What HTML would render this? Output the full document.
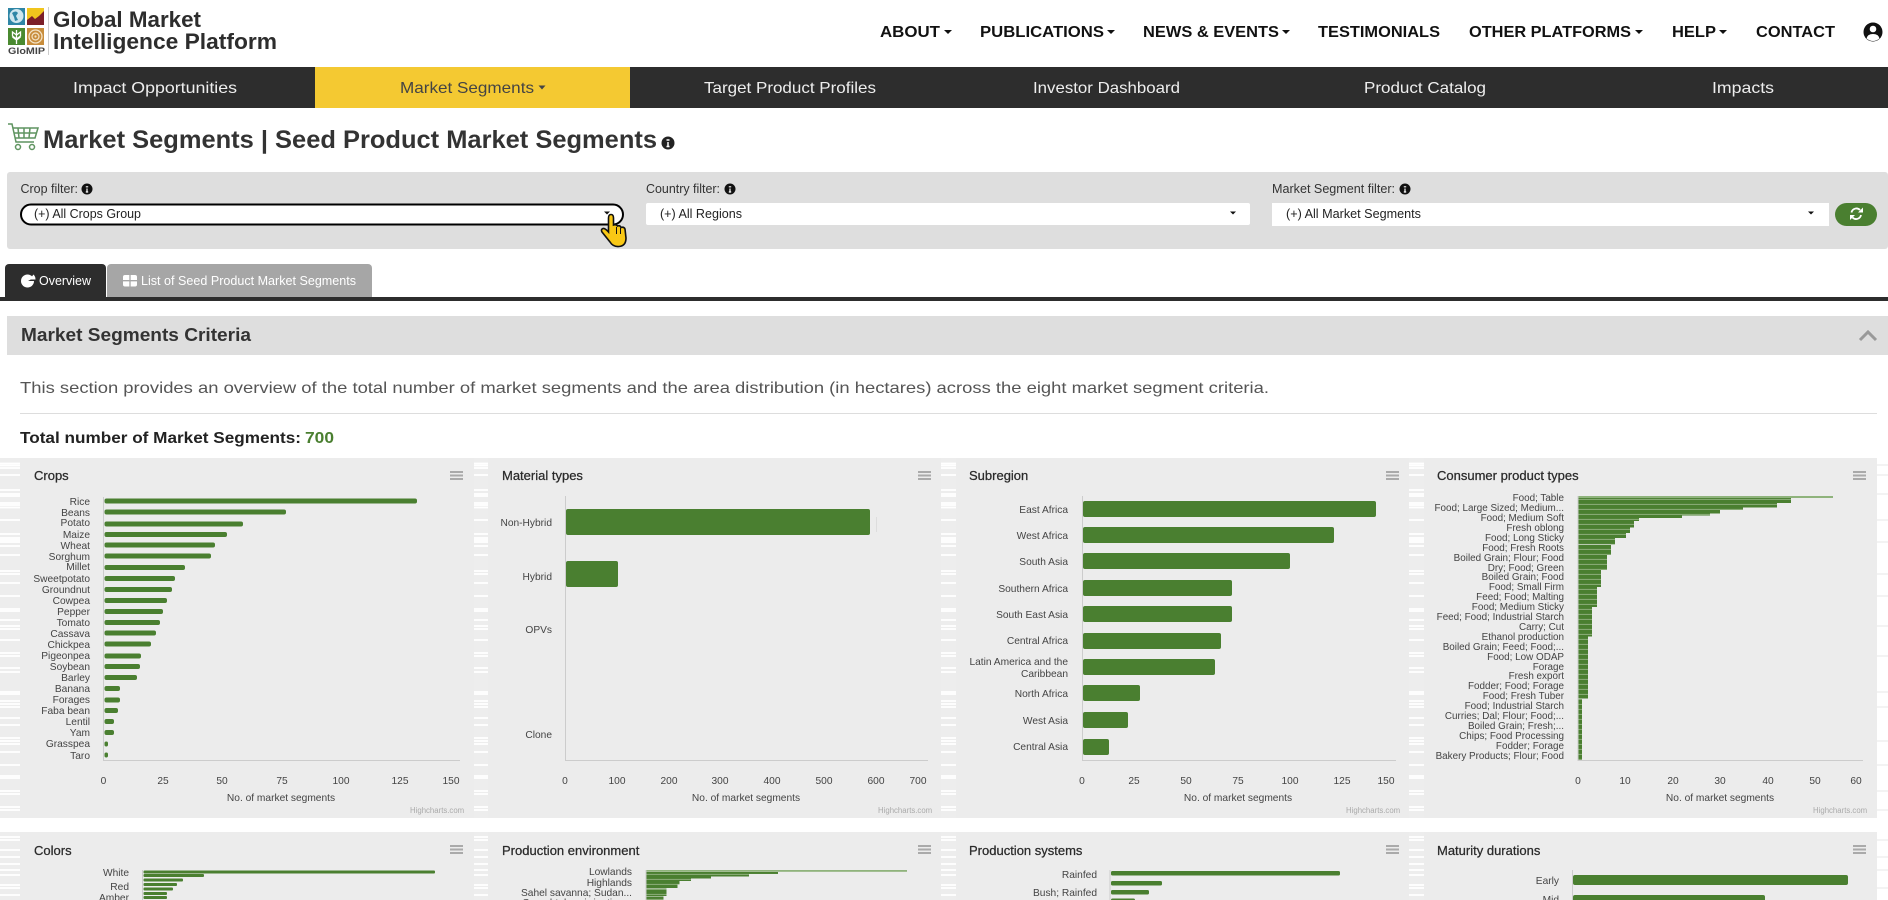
<!DOCTYPE html>
<html lang="en">
<head>
<meta charset="utf-8">
<title>Market Segments | Seed Product Market Segments</title>
<style>
html,body{margin:0;padding:0;background:#fff;overflow:hidden}
svg{display:block;font-family:"Liberation Sans",Arial,sans-serif}
.m{font-size:15.5px;font-weight:700;fill:#111}
.n{font-size:16px;fill:#eee}
.f{font-size:12.5px;fill:#333}
.s{font-size:12.5px;fill:#222}
.t{font-size:13px;fill:#2a2a2a;stroke:#2a2a2a;stroke-width:.25px}
.l{font-size:10.2px;fill:#444;text-anchor:end}
.c{font-size:9.9px;fill:#444;text-anchor:end}
.x{font-size:10.2px;fill:#444;text-anchor:middle}
.h{font-size:7.8px;fill:#aaa}
.b{fill:#4a7f30}
</style>
</head>
<body>
<svg xmlns="http://www.w3.org/2000/svg" width="1888" height="900" viewBox="0 0 1888 900">
<defs>
<pattern id="st" width="10" height="5" patternUnits="userSpaceOnUse"><rect width="10" height="5" fill="#4a7f30"/><rect y="3.9" width="10" height="1.1" fill="#86a973"/></pattern>
<g id="stripes"><path d="M0 463.500H20M0 465.500H20M0 468H20M0 475H20M0 490H20M0 494H20M0 496H20M0 503H20M0 505H20M0 507.500H20M0 520H20M0 534H20M0 538H20M0 540H20M0 542H20M0 546H20M0 555H20M0 571H20M0 574H20M0 583H20M0 596H20M0 609H20M0 611H20M0 620H20M0 626H20M0 629H20M0 640H20M0 653H20M0 656H20M0 668H20M0 672H20M0 692H20M0 694H20M0 701H20M0 704H20M0 707H20M0 718H20M0 725H20M0 738H20M0 741H20M0 744H20M0 752H20M0 765H20M0 776H20M0 778H20M0 791H20M0 794H20M0 807H20M0 810H20M0 837H20M0 840H20M0 850H20M0 857H20M0 864H20M0 870H20M0 875H20M0 885H20M0 888H20M0 895H20" stroke="#fff" stroke-width="1.700" fill="none"/></g>
</defs>

<rect width="1888" height="900" fill="#fff"/>

<!-- logo -->
<rect x="8" y="8" width="17" height="17" fill="#2f86a6"/>
<circle cx="16.500" cy="16" r="7" fill="#cfe6ee"/>
<path d="M12 13q4-3 6 0l-2 3 2 4-3 1-1-4z" fill="#2f86a6"/>
<rect x="27" y="8" width="17" height="17" fill="#f1c51d"/>
<path d="M27 25V20l5-4 3 3 4-3 5-5v14z" fill="#7c1f28"/>
<rect x="8" y="28" width="17" height="17" fill="#4a8a30"/>
<path d="M16.500 30v14M16.500 35l-4-3v4l4 3 4-3v-4zM16.500 40l-4-3M16.500 40l4-3" stroke="#fff" stroke-width="1.300" fill="none"/>
<rect x="27" y="28" width="17" height="17" fill="#c88d3c"/>
<circle cx="35.500" cy="36.500" r="6.500" fill="none" stroke="#f4e3c6" stroke-width="1.300"/>
<circle cx="35.500" cy="36.500" r="3.500" fill="none" stroke="#f4e3c6" stroke-width="1.200"/>
<circle cx="35.500" cy="36.500" r="1.100" fill="#f4e3c6"/>
<text x="8" y="54" font-size="9.500" font-weight="700" fill="#444" textLength="37" lengthAdjust="spacingAndGlyphs">GloMIP</text>
<path d="M48.500 7V55" stroke="#ccc"/>
<text x="53" y="27" font-size="22px" font-weight="700" fill="#2d2d2d" textLength="148" lengthAdjust="spacingAndGlyphs">Global Market</text>
<text x="53" y="49" font-size="22px" font-weight="700" fill="#2d2d2d" textLength="224" lengthAdjust="spacingAndGlyphs">Intelligence Platform</text>

<!-- top menu -->
<text class="m" x="880" y="37" textLength="60" lengthAdjust="spacingAndGlyphs">ABOUT</text>
<path d="M944 30h8l-4 4z" fill="#111"/>
<text class="m" x="980" y="37" textLength="124" lengthAdjust="spacingAndGlyphs">PUBLICATIONS</text>
<path d="M1107 30h8l-4 4z" fill="#111"/>
<text class="m" x="1143" y="37" textLength="136" lengthAdjust="spacingAndGlyphs">NEWS &amp; EVENTS</text>
<path d="M1282 30h8l-4 4z" fill="#111"/>
<text class="m" x="1318" y="37" textLength="122" lengthAdjust="spacingAndGlyphs">TESTIMONIALS</text>
<text class="m" x="1469" y="37" textLength="162" lengthAdjust="spacingAndGlyphs">OTHER PLATFORMS</text>
<path d="M1635 30h8l-4 4z" fill="#111"/>
<text class="m" x="1672" y="37" textLength="44" lengthAdjust="spacingAndGlyphs">HELP</text>
<path d="M1719 30h8l-4 4z" fill="#111"/>
<text class="m" x="1756" y="37" textLength="79" lengthAdjust="spacingAndGlyphs">CONTACT</text>
<circle cx="1873" cy="32" r="9.500" fill="#111"/>
<circle cx="1873" cy="29" r="3.300" fill="#fff"/>
<path d="M1866.500 38.500q1-4.500 6.500-4.500t6.500 4.500q-3 2.500-6.500 2.500t-6.500-2.500z" fill="#fff"/>

<!-- main nav -->
<rect x="0" y="67" width="1888" height="41" fill="#2d2d2d"/>
<rect x="315" y="67" width="315" height="41" fill="#f4c932"/>
<text class="n" x="73" y="93" textLength="164" lengthAdjust="spacingAndGlyphs">Impact Opportunities</text>
<text class="n" x="400" y="93" textLength="134" lengthAdjust="spacingAndGlyphs" style="fill:#444">Market Segments</text>
<path d="M538.500 85.500h7l-3.500 4z" fill="#444"/>
<text class="n" x="704" y="93" textLength="172" lengthAdjust="spacingAndGlyphs">Target Product Profiles</text>
<text class="n" x="1033" y="93" textLength="147" lengthAdjust="spacingAndGlyphs">Investor Dashboard</text>
<text class="n" x="1364" y="93" textLength="122" lengthAdjust="spacingAndGlyphs">Product Catalog</text>
<text class="n" x="1712" y="93" textLength="62" lengthAdjust="spacingAndGlyphs">Impacts</text>

<!-- page title -->
<g fill="none" stroke="#5f9460" stroke-width="1.500">
<path d="M8 124h4l4 18h18"/>
<path d="M13 128h25l-3 10H15"/>
<path d="M18 128l1 10M24 128v10M30 128l-1 10M14 133h22"/>
<circle cx="18" cy="147" r="2.500"/><circle cx="32" cy="147" r="2.500"/>
</g>
<text x="43" y="148" font-size="25px" font-weight="700" fill="#333" textLength="614" lengthAdjust="spacingAndGlyphs">Market Segments | Seed Product Market Segments</text>
<circle cx="668" cy="143" r="6.500" fill="#222"/>
<path d="M666.500 140h3M668 142v4.500M666.500 146.500h3" stroke="#fff" stroke-width="1.500" fill="none"/>

<!-- filter panel -->
<rect x="7" y="172" width="1881" height="77" rx="3" fill="#dedede"/>
<text class="f" x="20.500" y="193" textLength="57.500" lengthAdjust="spacingAndGlyphs">Crop filter:</text>
<circle cx="87" cy="189" r="5.500" fill="#111"/><path d="M85.800 186.800h2.400M87 188.500v3.500M85.800 192h2.400" stroke="#fff" stroke-width="1.200" fill="none"/>
<text class="f" x="646" y="193" textLength="74" lengthAdjust="spacingAndGlyphs">Country filter:</text>
<circle cx="730" cy="189" r="5.500" fill="#111"/><path d="M728.800 186.800h2.400M730 188.500v3.500M728.800 192h2.400" stroke="#fff" stroke-width="1.200" fill="none"/>
<text class="f" x="1272" y="193" textLength="123" lengthAdjust="spacingAndGlyphs">Market Segment filter:</text>
<circle cx="1405" cy="189" r="5.500" fill="#111"/><path d="M1403.800 186.800h2.400M1405 188.500v3.500M1403.800 192h2.400" stroke="#fff" stroke-width="1.200" fill="none"/>

<rect x="21" y="204.500" width="602" height="20" rx="10" fill="#fff" stroke="#000" stroke-width="2"/>
<text class="s" x="34" y="218" textLength="107" lengthAdjust="spacingAndGlyphs">(+) All Crops Group</text>
<path d="M604 211.500h6l-3 3z" fill="#111"/>
<rect x="646" y="203" width="604" height="22" rx="2" fill="#fff"/>
<text class="s" x="660" y="218" textLength="82" lengthAdjust="spacingAndGlyphs">(+) All Regions</text>
<path d="M1230 211.500h6l-3 3z" fill="#111"/>
<rect x="1272" y="203" width="557" height="23" fill="#fff"/>
<text class="s" x="1286" y="218" textLength="135" lengthAdjust="spacingAndGlyphs">(+) All Market Segments</text>
<path d="M1808 211.500h6l-3 3z" fill="#111"/>
<rect x="1835" y="203" width="42" height="23" rx="11.500" fill="#4a7f30"/>
<g fill="none" stroke="#fff" stroke-width="1.800">
<path d="M1851.500 212.500a5 5 0 0 1 8.500-2.500"/><path d="M1861 215a5 5 0 0 1-8.500 2.500"/>
</g>
<path d="M1863 207.500v5h-5zM1850 220v-5h5z" fill="#fff"/>
<path d="M608.500 218Q608.500 214.500 611 214.500Q613.500 214.500 613.500 218V225Q616 224 617.500 226Q620 225 621 227.500Q624 226.500 625 229L626 238Q626 246 619 246.500Q613 247 610 242L602 232Q600.500 229.500 603 228.500Q605 228 608.500 232Z" fill="#f9c815" stroke="#111" stroke-width="1.600"/>
<path d="M616.500 227v7M620.500 228v6" stroke="#111" stroke-width="1"/>

<!-- tabs -->
<path d="M5 297V268a4 4 0 0 1 4-4h93a4 4 0 0 1 4 4v29z" fill="#2d2d2d"/>
<path d="M107 297V268a4 4 0 0 1 4-4h257a4 4 0 0 1 4 4v29z" fill="#a6a6a6"/>
<circle cx="27.500" cy="281" r="6.500" fill="#fff"/>
<path d="M28 281h7.500a7 7 0 0 0-1-3.500z" fill="#2d2d2d"/><path d="M29.500 279.500l4-5a7 7 0 0 1 2 5z" fill="#fff"/>
<text x="39" y="285" font-size="12.500px" fill="#fff" textLength="52" lengthAdjust="spacingAndGlyphs">Overview</text>
<rect x="123" y="275" width="14" height="11.500" rx="2" fill="#fff"/>
<path d="M123 280.700h14M130 275v11.500" stroke="#a6a6a6" stroke-width="1.300"/>
<text x="141" y="285" font-size="12.500px" fill="#fff" textLength="215" lengthAdjust="spacingAndGlyphs">List of Seed Product Market Segments</text>
<rect x="0" y="297" width="1888" height="4" fill="#2d2d2d"/>

<!-- section header -->
<rect x="7" y="316" width="1881" height="39" fill="#dedede"/>
<text x="21" y="341" font-size="18px" font-weight="700" fill="#333" textLength="230" lengthAdjust="spacingAndGlyphs">Market Segments Criteria</text>
<path d="M1860 340l8-8 8 8" fill="none" stroke="#999" stroke-width="3"/>
<text x="20" y="393" font-size="16px" fill="#555" textLength="1249" lengthAdjust="spacingAndGlyphs">This section provides an overview of the total number of market segments and the area distribution (in hectares) across the eight market segment criteria.</text>
<path d="M20 413.500H1877" stroke="#ddd"/>
<text x="20" y="443" font-size="16px" font-weight="700" fill="#222" textLength="281" lengthAdjust="spacingAndGlyphs">Total number of Market Segments:</text>
<text x="305" y="443" font-size="16px" font-weight="700" fill="#4a7f30" textLength="29" lengthAdjust="spacingAndGlyphs">700</text>

<!-- gutters and cards -->
<g fill="#ededed">
<rect x="0" y="458" width="20" height="360"/><rect x="0" y="832" width="20" height="68"/>
<rect x="474" y="458" width="14" height="360"/><rect x="474" y="832" width="14" height="68"/>
<rect x="941" y="458" width="15" height="360"/><rect x="941" y="832" width="15" height="68"/>
<rect x="1409" y="458" width="15" height="360"/><rect x="1409" y="832" width="15" height="68"/>
</g>
<use href="#stripes"/>
<use href="#stripes" x="474"/>
<use href="#stripes" x="941"/>
<use href="#stripes" x="1409"/>
<g fill="#ececec">
<rect x="20" y="458" width="454" height="360"/><rect x="20" y="832" width="454" height="68"/>
<rect x="488" y="458" width="453" height="360"/><rect x="488" y="832" width="453" height="68"/>
<rect x="956" y="458" width="453" height="360"/><rect x="956" y="832" width="453" height="68"/>
<rect x="1424" y="458" width="453" height="360"/><rect x="1424" y="832" width="453" height="68"/>
</g>
<path d="M1877 465H1888M1877 475H1888M1877 494H1888M1877 520H1888M1877 542H1888M1877 574H1888M1877 596H1888M1877 626H1888M1877 656H1888M1877 692H1888M1877 707H1888M1877 741H1888M1877 765H1888M1877 791H1888M1877 810H1888M1877 840H1888M1877 857H1888M1877 870H1888M1877 888H1888" stroke="#ececec" stroke-width="1.200" fill="none"/>

<!-- menu icons -->
<g stroke="#aaa" stroke-width="2" fill="none">
<path d="M450 472H463M450 475.500H463M450 479H463M918 472H931M918 475.500H931M918 479H931M1386 472H1399M1386 475.500H1399M1386 479H1399M1853 472H1866M1853 475.500H1866M1853 479H1866"/>
<path d="M450 846H463M450 849.500H463M450 853H463M918 846H931M918 849.500H931M918 853H931M1386 846H1399M1386 849.500H1399M1386 853H1399M1853 846H1866M1853 849.500H1866M1853 853H1866"/>
</g>

<!-- Crops -->
<text class="t" x="34" y="480">Crops</text>
<path d="M103.500 497V760.500H460" stroke="#ccc" fill="none"/>
<g class="b">
<rect x="104.500" y="498.500" width="312.500" height="5" rx="2"/><rect x="104.500" y="509.500" width="181.500" height="5" rx="2"/><rect x="104.500" y="521.500" width="138.500" height="5" rx="2"/><rect x="104.500" y="532" width="122.500" height="5" rx="2"/><rect x="104.500" y="542.500" width="110.500" height="5" rx="2"/><rect x="104.500" y="553.500" width="106.500" height="5" rx="2"/><rect x="104.500" y="565" width="80.500" height="5" rx="2"/><rect x="104.500" y="576" width="70.500" height="5" rx="2"/><rect x="104.500" y="587" width="67.500" height="5" rx="2"/><rect x="104.500" y="598" width="62.500" height="5" rx="2"/><rect x="104.500" y="609" width="58.500" height="5" rx="2"/><rect x="104.500" y="620" width="55.500" height="5" rx="2"/><rect x="104.500" y="630.500" width="51.500" height="5" rx="2"/><rect x="104.500" y="641.500" width="46.500" height="5" rx="2"/><rect x="104.500" y="653.500" width="36.500" height="5" rx="2"/><rect x="104.500" y="664" width="35.500" height="5" rx="2"/><rect x="104.500" y="675" width="32.500" height="5" rx="2"/><rect x="104.500" y="686" width="15.500" height="5" rx="2"/><rect x="104.500" y="697.500" width="15.500" height="5" rx="2"/><rect x="104.500" y="708" width="13.500" height="5" rx="2"/><rect x="104.500" y="719" width="9.500" height="5" rx="2"/><rect x="104.500" y="730" width="9.500" height="5" rx="2"/><rect x="104.500" y="741.500" width="3.500" height="5" rx="1.700"/><rect x="104.500" y="752.500" width="3.500" height="5" rx="1.700"/>
</g>
<text class="l" x="90" y="505">Rice</text><text class="l" x="90" y="516">Beans</text><text class="l" x="90" y="526">Potato</text><text class="l" x="90" y="538">Maize</text><text class="l" x="90" y="549">Wheat</text><text class="l" x="90" y="560">Sorghum</text><text class="l" x="90" y="570">Millet</text><text class="l" x="90" y="582">Sweetpotato</text><text class="l" x="90" y="593">Groundnut</text><text class="l" x="90" y="604">Cowpea</text><text class="l" x="90" y="615">Pepper</text><text class="l" x="90" y="626">Tomato</text><text class="l" x="90" y="637">Cassava</text><text class="l" x="90" y="648">Chickpea</text><text class="l" x="90" y="659">Pigeonpea</text><text class="l" x="90" y="670">Soybean</text><text class="l" x="90" y="681">Barley</text><text class="l" x="90" y="692">Banana</text><text class="l" x="90" y="703">Forages</text><text class="l" x="90" y="714">Faba bean</text><text class="l" x="90" y="725">Lentil</text><text class="l" x="90" y="736">Yam</text><text class="l" x="90" y="747">Grasspea</text><text class="l" x="90" y="759">Taro</text>
<text class="x" x="103.500" y="784">0</text><text class="x" x="163" y="784">25</text><text class="x" x="222" y="784">50</text><text class="x" x="282" y="784">75</text><text class="x" x="341" y="784">100</text><text class="x" x="400" y="784">125</text><text class="x" x="451" y="784">150</text>
<text class="x" x="281" y="801">No. of market segments</text>
<text class="h" x="410" y="813">Highcharts.com</text>

<!-- Material types -->
<text class="t" x="502" y="480">Material types</text>
<path d="M565.500 496V760.500H928" stroke="#ccc" fill="none"/>
<path d="M876.500 517V532" stroke="#ddd"/>
<rect class="b" x="566" y="509" width="304" height="26" rx="2"/>
<rect class="b" x="566" y="561" width="52" height="26" rx="2"/>
<text class="l" x="552" y="526">Non-Hybrid</text><text class="l" x="552" y="580">Hybrid</text><text class="l" x="552" y="633">OPVs</text><text class="l" x="552" y="738">Clone</text>
<text class="x" x="565" y="784">0</text><text class="x" x="617" y="784">100</text><text class="x" x="669" y="784">200</text><text class="x" x="720" y="784">300</text><text class="x" x="772" y="784">400</text><text class="x" x="824" y="784">500</text><text class="x" x="876" y="784">600</text><text class="x" x="918" y="784">700</text>
<text class="x" x="746" y="801">No. of market segments</text>
<text class="h" x="878" y="813">Highcharts.com</text>

<!-- Subregion -->
<text class="t" x="969" y="480">Subregion</text>
<path d="M1082.500 496V760.500H1396" stroke="#ccc" fill="none"/>
<g class="b">
<rect x="1083" y="501" width="293" height="16" rx="2"/><rect x="1083" y="527" width="251" height="16" rx="2"/><rect x="1083" y="553" width="207" height="16" rx="2"/><rect x="1083" y="580" width="149" height="16" rx="2"/><rect x="1083" y="606" width="149" height="16" rx="2"/><rect x="1083" y="633" width="138" height="16" rx="2"/><rect x="1083" y="659" width="132" height="16" rx="2"/><rect x="1083" y="685" width="57" height="16" rx="2"/><rect x="1083" y="712" width="45" height="16" rx="2"/><rect x="1083" y="739" width="26" height="16" rx="2"/>
</g>
<text class="l" x="1068" y="513">East Africa</text><text class="l" x="1068" y="539">West Africa</text><text class="l" x="1068" y="565">South Asia</text><text class="l" x="1068" y="592">Southern Africa</text><text class="l" x="1068" y="618">South East Asia</text><text class="l" x="1068" y="644">Central Africa</text><text class="l" x="1068" y="665">Latin America and the</text><text class="l" x="1068" y="677">Caribbean</text><text class="l" x="1068" y="697">North Africa</text><text class="l" x="1068" y="724">West Asia</text><text class="l" x="1068" y="750">Central Asia</text>
<text class="x" x="1082" y="784">0</text><text class="x" x="1134" y="784">25</text><text class="x" x="1186" y="784">50</text><text class="x" x="1238" y="784">75</text><text class="x" x="1290" y="784">100</text><text class="x" x="1342" y="784">125</text><text class="x" x="1386" y="784">150</text>
<text class="x" x="1238" y="801">No. of market segments</text>
<text class="h" x="1346" y="813">Highcharts.com</text>

<!-- Consumer product types -->
<text class="t" x="1437" y="480">Consumer product types</text>
<path d="M1578 496V760.500H1863" stroke="#ccc" fill="none"/>
<rect x="1578.500" y="496" width="254.500" height="2" fill="#8fb37c"/>
<g fill="url(#st)">
<rect x="1578.500" y="498" width="212.500" height="5"/><rect x="1578.500" y="503" width="198.500" height="4.500"/><rect x="1578.500" y="507.500" width="164.500" height="2.500"/><rect x="1578.500" y="510" width="141.500" height="3.500"/><rect x="1578.500" y="513.500" width="131.500" height="2"/><rect x="1578.500" y="515.500" width="103.500" height="2.500"/><rect x="1578.500" y="518" width="60.500" height="3"/><rect x="1578.500" y="521" width="55.500" height="6.500"/><rect x="1578.500" y="527.500" width="51.500" height="5.500"/><rect x="1578.500" y="533" width="47.500" height="5"/><rect x="1578.500" y="538" width="36.500" height="6.500"/><rect x="1578.500" y="545" width="32.500" height="10"/><rect x="1578.500" y="555" width="28.500" height="15"/><rect x="1578.500" y="570" width="22.500" height="17"/><rect x="1578.500" y="587" width="18.500" height="20"/><rect x="1578.500" y="607" width="13.500" height="29.500"/><rect x="1578.500" y="636.500" width="9.500" height="62"/><rect x="1578.500" y="699" width="3.500" height="61"/>
</g>
<text class="c" x="1564" y="501">Food; Table</text><text class="c" x="1564" y="511">Food; Large Sized; Medium...</text><text class="c" x="1564" y="521">Food; Medium Soft</text><text class="c" x="1564" y="531">Fresh oblong</text><text class="c" x="1564" y="541">Food; Long Sticky</text><text class="c" x="1564" y="551">Food; Fresh Roots</text><text class="c" x="1564" y="561">Boiled Grain; Flour; Food</text><text class="c" x="1564" y="571">Dry; Food; Green</text><text class="c" x="1564" y="580">Boiled Grain; Food</text><text class="c" x="1564" y="590">Food; Small Firm</text><text class="c" x="1564" y="600">Feed; Food; Malting</text><text class="c" x="1564" y="610">Food; Medium Sticky</text><text class="c" x="1564" y="620">Feed; Food; Industrial Starch</text><text class="c" x="1564" y="630">Carry; Cut</text><text class="c" x="1564" y="640">Ethanol production</text><text class="c" x="1564" y="650">Boiled Grain; Feed; Food;...</text><text class="c" x="1564" y="660">Food; Low ODAP</text><text class="c" x="1564" y="670">Forage</text><text class="c" x="1564" y="679">Fresh export</text><text class="c" x="1564" y="689">Fodder; Food; Forage</text><text class="c" x="1564" y="699">Food; Fresh Tuber</text><text class="c" x="1564" y="709">Food; Industrial Starch</text><text class="c" x="1564" y="719">Curries; Dal; Flour; Food;...</text><text class="c" x="1564" y="729">Boiled Grain; Fresh;...</text><text class="c" x="1564" y="739">Chips; Food Processing</text><text class="c" x="1564" y="749">Fodder; Forage</text><text class="c" x="1564" y="759">Bakery Products; Flour; Food</text>
<text class="x" x="1578" y="784">0</text><text class="x" x="1625" y="784">10</text><text class="x" x="1673" y="784">20</text><text class="x" x="1720" y="784">30</text><text class="x" x="1768" y="784">40</text><text class="x" x="1815" y="784">50</text><text class="x" x="1856" y="784">60</text>
<text class="x" x="1720" y="801">No. of market segments</text>
<text class="h" x="1813" y="813">Highcharts.com</text>

<!-- Colors -->
<text class="t" x="34" y="855">Colors</text>
<path d="M142.500 870V900" stroke="#ccc"/>
<g class="b"><rect x="143.500" y="870.500" width="291.500" height="3" rx="1"/><rect x="143.500" y="874" width="60.500" height="3" rx="1"/><rect x="143.500" y="878.500" width="39.500" height="3" rx="1"/><rect x="143.500" y="883" width="33.500" height="3" rx="1"/><rect x="143.500" y="887.500" width="29.500" height="3" rx="1"/><rect x="143.500" y="892" width="23.500" height="3" rx="1"/><rect x="143.500" y="896" width="23.500" height="3" rx="1"/></g>
<text class="l" x="129" y="876">White</text><text class="l" x="129" y="890">Red</text><text class="l" x="129" y="901">Amber</text>

<!-- Production environment -->
<text class="t" x="502" y="855">Production environment</text>
<path d="M646 870V900" stroke="#ccc"/>
<rect x="646.500" y="870" width="260.500" height="1.800" fill="#8fb37c"/>
<g fill="url(#st)"><rect x="646.500" y="872" width="131.500" height="2"/><rect x="646.500" y="874" width="102.500" height="2.500"/><rect x="646.500" y="876.500" width="64.500" height="2"/><rect x="646.500" y="878.500" width="44.500" height="2.500"/><rect x="646.500" y="881" width="33" height="3.500"/><rect x="646.500" y="884.500" width="31" height="3.500"/><rect x="646.500" y="888.500" width="20" height="7.500"/><rect x="646.500" y="896.500" width="17" height="3.500"/></g>
<text class="l" x="632" y="875">Lowlands</text><text class="l" x="632" y="886">Highlands</text><text class="l" x="632" y="896">Sahel savanna; Sudan...</text><text class="l" x="632" y="906">Cereal-tuber; irrigation...</text>

<!-- Production systems -->
<text class="t" x="969" y="855">Production systems</text>
<path d="M1110 870V900" stroke="#ccc"/>
<g class="b"><rect x="1111" y="871" width="229" height="4.500" rx="1.500"/><rect x="1111" y="881" width="51" height="4.500" rx="1.500"/><rect x="1111" y="890" width="38" height="4.500" rx="1.500"/><rect x="1111" y="898.500" width="24" height="4.500" rx="1.500"/></g>
<text class="l" x="1097" y="878">Rainfed</text><text class="l" x="1097" y="896">Bush; Rainfed</text>

<!-- Maturity durations -->
<text class="t" x="1437" y="855">Maturity durations</text>
<path d="M1572.500 870V900" stroke="#ccc"/>
<rect class="b" x="1573" y="875" width="275" height="10" rx="2"/>
<rect class="b" x="1573" y="895" width="192" height="10" rx="2"/>
<text class="l" x="1559" y="884">Early</text><text class="l" x="1559" y="903">Mid</text>
</svg>
</body>
</html>
